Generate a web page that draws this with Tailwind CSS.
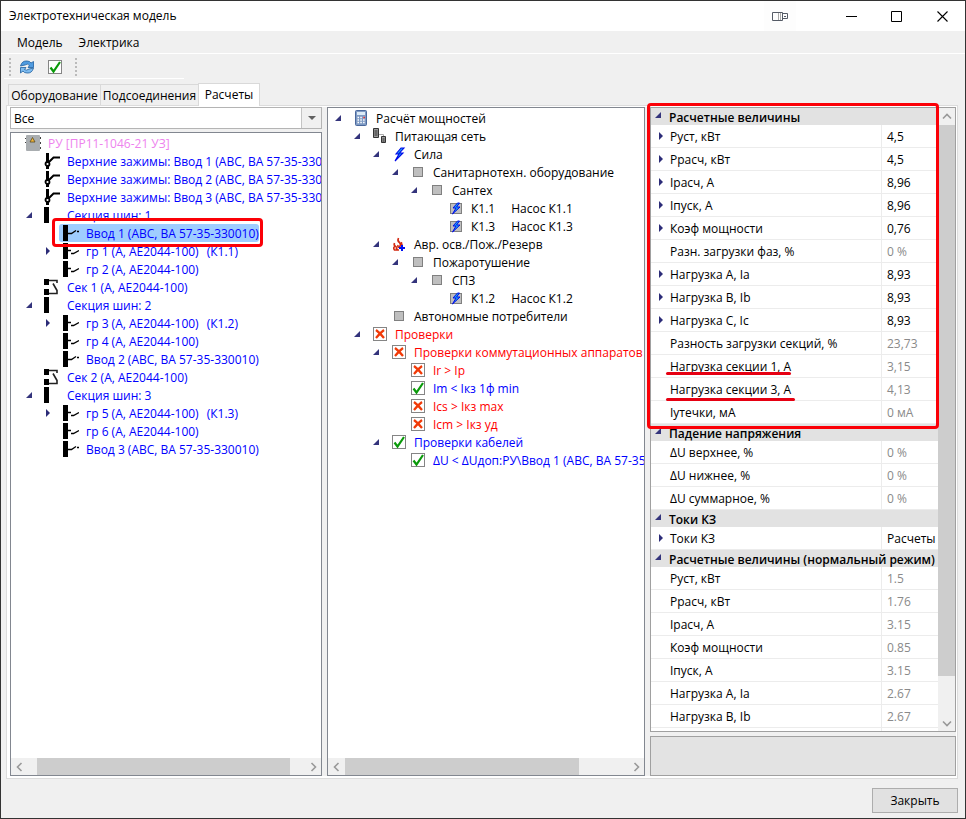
<!DOCTYPE html>
<html lang="ru">
<head>
  <meta charset="UTF-8" />
  <meta name="viewport" content="width=device-width, initial-scale=1.0"/>
  <title>Электротехническая модель</title>
  <script src="https://cdn.jsdelivr.net/npm/@tailwindcss/browser@4"></script>
</head>
<body class="h-screen overflow-hidden flex flex-col border border-[#333] bg-[#f0f0f0] text-black text-[12px]/[16px] font-['Open_Sans','Noto_Sans',sans-serif]">

  <!-- icon set -->
  <svg class="hidden">
    <symbol id="open" viewBox="0 0 6 6"><path d="M6 0V6H0Z" fill="#34347c"/></symbol>
    <symbol id="closed" viewBox="0 0 6 8"><path d="M1 0L5 4L1 8Z" fill="#2c2c78"/></symbol>
    <symbol id="ru" viewBox="0 0 16 16">
      <rect x="1" y="0" width="14" height="16" rx="1" fill="#a9adb0"/>
      <path d="M0 3h1v1H0zM0 7h1v1H0zM15 2h1v2h-1zM15 7h1v2h-1zM15 12h1v2h-1z" fill="#444"/>
      <path d="M7.500 2.500L10 7H5Z" fill="#f2b63a" stroke="#5a4a20" stroke-width=".8"/>
    </symbol>
    <symbol id="clamp" viewBox="0 0 16 16">
      <path d="M3.500 0V9M3.500 13V16" stroke="#000" stroke-width="3"/>
      <circle cx="3.500" cy="11" r="2" fill="#fff" stroke="#000" stroke-width="1.800"/>
      <path d="M4.500 9.500L9.500 4.500H16" fill="none" stroke="#000" stroke-width="2"/>
    </symbol>
    <symbol id="bus" viewBox="0 0 16 16"><rect width="5" height="16" fill="#000"/></symbol>
    <symbol id="input" viewBox="0 0 16 16">
      <rect width="5" height="16" fill="#000"/>
      <path d="M5 8.500H8.500L13 5.500M14 6.500H16" fill="none" stroke="#000" stroke-width="1.300"/>
    </symbol>
    <symbol id="group" viewBox="0 0 16 16">
      <rect width="5" height="16" fill="#000"/>
      <path d="M5 7.500H8M8 10.500H10.500L16 7.500" fill="none" stroke="#000" stroke-width="1.300"/>
    </symbol>
    <symbol id="section" viewBox="0 0 16 16">
      <path d="M0 0H5V6H0ZM0 10H5V16H0Z" fill="#000"/>
      <path d="M5 1.500H13V4M13 11V14.500H5M9 4.500L13 11.500" fill="none" stroke="#222" stroke-width="1.600"/>
    </symbol>
    <symbol id="calc" viewBox="0 0 16 16">
      <rect x="2.500" y=".5" width="11" height="15" rx="1" fill="#7f9bc4" stroke="#4a689c"/>
      <rect x="4" y="2" width="8" height="3" fill="#dcebf7"/>
      <path d="M4.500 7.500H12M4.500 10H12M4.500 12.500H12" stroke="#fff" stroke-width="1.500" stroke-dasharray="1.500 1.300"/>
      <path d="M10.200 7.500H12" stroke="#e03030" stroke-width="1.500"/>
    </symbol>
    <symbol id="net" viewBox="0 0 16 16">
      <path d="M1.500 .5H6.500V9.500H1.500ZM9.500 8.500H13.500V14.500H9.500Z" fill="#999" stroke="#333"/>
      <path d="M2.500 3H5.500M2.500 5H5.500M2.500 7H5.500M10.500 11H12.500M10.500 13H12.500" stroke="#333"/>
      <path d="M7 6.500H11.500V8" fill="none" stroke="#aaa"/>
    </symbol>
    <symbol id="bolt" viewBox="0 0 16 16">
      <path d="M10 2L5 8H8L4 15L12 7H8.500L13 2Z" fill="#19a3f5" stroke="#0008e8" stroke-width="1.100"/>
    </symbol>
    <symbol id="square" viewBox="0 0 16 16"><rect x="3.500" y="3.500" width="9" height="9" fill="#bfbfbf" stroke="#808080"/></symbol>
    <symbol id="boltbox" viewBox="0 0 16 16">
      <rect x="2.500" y="3.500" width="11" height="10" fill="#bfbfbf" stroke="#808080"/>
      <path d="M9.500 3L5 8H8L4.500 14L12 7H8.500L11.500 3Z" fill="#19a3f5" stroke="#0008e8"/>
    </symbol>
    <symbol id="fire" viewBox="0 0 16 16">
      <path d="M3.500 7Q2.500 9 4.500 10.500Q1.500 11 3.500 14H8M7.500 2Q6 5 8.500 6.500Q10.500 9 8.500 11Q6.500 12 7 9M10.500 6Q10 8 11.500 9M5 11.500L6.500 14" fill="none" stroke="#d22a12" stroke-width="1.600"/>
      <path d="M11 9V15M8 12H14" stroke="#0010f0" stroke-width="2"/>
    </symbol>
    <symbol id="cross" viewBox="0 0 16 16">
      <rect x="1.500" y="1.500" width="13" height="13" fill="#fff" stroke="#858585"/>
      <path d="M4 4Q8 7 12 12M12 4Q8 7 4 12" fill="none" stroke="#f13a08" stroke-width="2.200"/>
    </symbol>
    <symbol id="check" viewBox="0 0 16 16">
      <rect x="1.500" y="1.500" width="13" height="13" fill="#fff" stroke="#858585"/>
      <path d="M3.500 8.500L6.500 12.500L13 3" fill="none" stroke="#0a9a0a" stroke-width="2.200"/>
    </symbol>
    <symbol id="refresh" viewBox="0 0 16 16">
      <path d="M1.500 7Q3 1.500 8 2Q11 2 12 4L14.500 2.500V8.500H9L10.500 6.500Q8.500 4 6 6Z" fill="#4f9be0" stroke="#20609f" stroke-width=".8"/>
      <path d="M14.500 9Q13 14.500 8 14Q5 14 4 12L1.500 14V8.500H7L5.500 10.500Q7.500 12 10 10Z" fill="#7dbbef" stroke="#20609f" stroke-width=".8"/>
    </symbol>
    <symbol id="chevron" viewBox="0 0 10 10"><path d="M6.500 1L2.500 5L6.500 9" fill="none" stroke="#999" stroke-width="1.600"/></symbol>
  </svg>

  <header class="h-[30px] shrink-0 flex items-center bg-white pl-2">
    <h1 class="flex-1">Электротехническая модель</h1>
    <div class="w-8 h-full flex items-center justify-center bg-[#fdfdfd] mr-8">
      <svg class="w-4 h-[11px]" viewBox="0 0 16 11" fill="none" stroke="#555b66">
        <path d="M.5 1.500H10.500V9.500H.5Z"/><path d="M6.500 2V9M8.500 2V9" stroke="#aaa"/><path d="M10.500 2.500H15.500V7.500H10.500ZM12 5.500H14"/>
      </svg>
    </div>
    <button class="w-[46px] h-full flex items-center justify-center" aria-label="Свернуть"><svg class="size-[11px]" viewBox="0 0 11 11"><path d="M0 5.500H11" stroke="#000"/></svg></button>
    <button class="w-[45px] h-full flex items-center justify-center" aria-label="Развернуть"><svg class="size-[11px]" viewBox="0 0 11 11"><path d="M.5 .5H10.500V10.500H.5Z" fill="none" stroke="#000"/></svg></button>
    <button class="w-[46px] h-full flex items-center justify-center" aria-label="Закрыть окно"><svg class="size-[11px]" viewBox="0 0 11 11"><path d="M.5 .5L10.500 10.500M10.500 .5L.5 10.500" stroke="#000" stroke-width="1.100"/></svg></button>
  </header>

  <nav class="h-[23px] shrink-0 flex items-center gap-4 pl-4 pt-[2px] border-b border-white">
    <button>Модель</button>
    <button>Электрика</button>
  </nav>

  <div class="h-[25px] w-[180px] shrink-0 ml-[3px] pl-[5px] pt-[2px] flex items-center border-b border-white">
    <span class="h-[18px] border-l-2 border-dotted border-[#bbb]"></span>
    <button class="ml-2 size-4" aria-label="Обновить"><svg class="size-4"><use href="#refresh"/></svg></button>
    <button class="ml-3 size-4" aria-label="Проверить"><svg class="size-4"><use href="#check"/></svg></button>
    <span class="h-[18px] ml-3 border-l-2 border-dotted border-[#bbb]"></span>
  </div>

  <div class="h-[27px] shrink-0 flex items-end pl-[7px] relative z-10 -mb-px" role="tablist">
    <button role="tab" class="w-[93px] h-[21px] mb-px pt-[2px] flex items-center justify-center border border-b-0 border-[#d9d9d9] whitespace-nowrap">Оборудование</button>
    <button role="tab" class="w-[97px] h-[21px] mb-px pt-[2px] flex items-center justify-center border border-x-0 border-b-0 border-[#d9d9d9] whitespace-nowrap">Подсоединения</button>
    <button role="tab" aria-selected="true" class="w-[62px] h-[23px] border border-b-0 border-[#d9d9d9] bg-white whitespace-nowrap">Расчеты</button>
  </div>

  <main class="flex-1 min-h-0 ml-[5px] mr-[7px] border border-[#dcdcdc] bg-white pt-px pr-px pb-[2px] pl-[3px]">
    <div class="h-full grid grid-cols-[312fr_318fr_306fr] gap-[5px] bg-[#f0f0f0]">

      <section class="min-w-0 min-h-0 flex flex-col gap-[3px]">
        <div class="relative h-[22px] shrink-0">
          <select id="filter" aria-label="Фильтр" class="w-full h-full appearance-none bg-white border border-[#b4b4b4] pl-[3px] pt-[2px]">
            <option>Все</option>
          </select>
          <span class="absolute right-px inset-y-px w-5 bg-[#f0f0f0] border-l border-[#c4c4c4] flex items-center justify-center pointer-events-none">
            <svg class="w-2 h-1" viewBox="0 0 8 4"><path d="M0 0H8L4 4Z" fill="#606060"/></svg>
          </span>
        </div>
        <div class="flex-1 min-h-0 flex flex-col bg-white border border-[#828790]">
          <ul id="equipment" role="tree" class="flex-1 min-h-0 overflow-hidden pt-px"></ul>
          <div class="h-[17px] shrink-0 flex bg-[#f0f0f0]">
            <button class="w-[17px] flex items-center justify-center" aria-label="Влево"><svg class="size-[10px]"><use href="#chevron"/></svg></button>
            <div class="flex-[9]"></div>
            <div class="flex-[253] bg-[#cdcdcd]"></div>
            <div class="flex-[14]"></div>
            <button class="w-[17px] flex items-center justify-center" aria-label="Вправо"><svg class="size-[10px] rotate-180"><use href="#chevron"/></svg></button>
          </div>
        </div>
      </section>

      <section class="min-w-0 min-h-0 flex flex-col bg-white border border-[#828790]">
        <ul id="power" role="tree" class="flex-1 min-h-0 overflow-hidden pt-px"></ul>
        <div class="h-[17px] shrink-0 flex bg-[#f0f0f0]">
          <button class="w-[17px] flex items-center justify-center" aria-label="Влево"><svg class="size-[10px]"><use href="#chevron"/></svg></button>
          <div class="flex-[234] bg-[#cdcdcd]"></div>
          <div class="flex-[48]"></div>
          <button class="w-[17px] flex items-center justify-center" aria-label="Вправо"><svg class="size-[10px] rotate-180"><use href="#chevron"/></svg></button>
        </div>
      </section>

      <section class="relative min-w-0 min-h-0 flex flex-col gap-[4px]">
        <div class="flex-1 min-h-0 flex bg-white border border-[#a0a0a0]">
          <div class="flex-1 min-w-0 overflow-hidden">
            <table class="w-full table-fixed border-separate border-spacing-0">
              <colgroup><col /><col class="w-[56px]" /></colgroup>
              <tbody id="props"></tbody>
            </table>
          </div>
          <div class="w-[17px] shrink-0 flex flex-col bg-[#f0f0f0]">
            <button class="h-[17px] flex items-center justify-center" aria-label="Вверх"><svg class="size-[10px] rotate-90"><use href="#chevron"/></svg></button>
            <div class="flex-[551] bg-[#cdcdcd]"></div>
            <div class="flex-[38]"></div>
            <button class="h-[17px] flex items-center justify-center" aria-label="Вниз"><svg class="size-[10px] -rotate-90"><use href="#chevron"/></svg></button>
          </div>
        </div>
        <div class="h-10 shrink-0 bg-[#e3e3e3] border border-[#a0a0a0]"></div>
        <!-- frame around the first group -->
        <div class="absolute -top-1 -left-[3px] right-[17px] h-[326px] border-3 border-[#fb0007] rounded-[4px] pointer-events-none"></div>
      </section>
    </div>
  </main>

  <footer class="h-[39px] shrink-0 flex items-center justify-end pr-[7px]">
    <button class="w-[86px] h-[25px] mt-1 pt-px bg-[#e1e1e1] border border-[#adadad]">Закрыть</button>
  </footer>

  <script>
    // [level, arrow, icon, text, note]
    const equipment = [
      [0, "", "ru", "РУ [ПР11-1046-21 УЗ]"],
      [1, "", "clamp", "Верхние зажимы: Ввод 1 (ABC, BA 57-35-330010)"],
      [1, "", "clamp", "Верхние зажимы: Ввод 2 (ABC, BA 57-35-330010)"],
      [1, "", "clamp", "Верхние зажимы: Ввод 3 (ABC, BA 57-35-330010)"],
      [1, "open", "bus", "Секция шин: 1"],
      [2, "", "input", "Ввод 1 (ABC, BA 57-35-330010)"],
      [2, "closed", "group", "гр 1 (A, AE2044-100)", "(К1.1)"],
      [2, "", "group", "гр 2 (A, AE2044-100)"],
      [1, "", "section", "Сек 1 (A, AE2044-100)"],
      [1, "open", "bus", "Секция шин: 2"],
      [2, "closed", "group", "гр 3 (A, AE2044-100)", "(К1.2)"],
      [2, "", "group", "гр 4 (A, AE2044-100)"],
      [2, "", "input", "Ввод 2 (ABC, BA 57-35-330010)"],
      [1, "", "section", "Сек 2 (A, AE2044-100)"],
      [1, "open", "bus", "Секция шин: 3"],
      [2, "closed", "group", "гр 5 (A, AE2044-100)", "(К1.3)"],
      [2, "", "group", "гр 6 (A, AE2044-100)"],
      [2, "", "input", "Ввод 3 (ABC, BA 57-35-330010)"]
    ];

    const power = [
      [0, "open", "calc", "Расчёт мощностей"],
      [1, "open", "net", "Питающая сеть"],
      [2, "open", "bolt", "Сила"],
      [3, "open", "square", "Санитарнотехн. оборудование"],
      [4, "open", "square", "Сантех"],
      [5, "", "boltbox", "К1.1", "Насос К1.1"],
      [5, "", "boltbox", "К1.3", "Насос К1.3"],
      [2, "open", "fire", "Авр. осв./Пож./Резерв"],
      [3, "open", "square", "Пожаротушение"],
      [4, "open", "square", "СПЗ"],
      [5, "", "boltbox", "К1.2", "Насос К1.2"],
      [2, "", "square", "Автономные потребители"],
      [1, "open", "cross", "Проверки"],
      [2, "open", "cross", "Проверки коммутационных аппаратов"],
      [3, "", "cross", "Ir &gt; Iр"],
      [3, "", "check", "Im &lt; Iкз 1ф min"],
      [3, "", "cross", "Ics &gt; Iкз max"],
      [3, "", "cross", "Icm &gt; Iкз уд"],
      [2, "open", "check", "Проверки кабелей"],
      [3, "", "check", "ΔU &lt; ΔUдоп:РУ\\Ввод 1 (ABC, BA 57-35-330010)"]
    ];

    // [arrow, name, value, dim]; one item alone is a group heading
    const props = [
      ["Расчетные величины"],
      ["closed", "Pуст, кВт", "4,5"],
      ["closed", "Pрасч, кВт", "4,5"],
      ["closed", "Iрасч, А", "8,96"],
      ["closed", "Iпуск, А", "8,96"],
      ["closed", "Коэф мощности", "0,76"],
      ["", "Разн. загрузки фаз, %", "0 %", 1],
      ["closed", "Нагрузка А, Ia", "8,93"],
      ["closed", "Нагрузка B, Ib", "8,93"],
      ["closed", "Нагрузка C, Ic", "8,93"],
      ["", "Разность загрузки секций, %", "23,73", 1],
      ["", "Нагрузка секции 1, А", "3,15", 1, '<i class="absolute -left-1 right-0 top-[15px] h-[3px] rounded-full bg-[#e60012]"></i>'],
      ["", "Нагрузка секции 3, А", "4,13", 1, '<i class="absolute -left-1 -right-1 top-[18px] h-[3px] rounded-full bg-[#e60012]"></i>'],
      ["", "Iутечки, мА", "0 мА", 1],
      ["Падение напряжения"],
      ["", "ΔU верхнее, %", "0 %", 1],
      ["", "ΔU нижнее, %", "0 %", 1],
      ["", "ΔU суммарное, %", "0 %", 1],
      ["Токи КЗ"],
      ["closed", "Токи КЗ", "Расчеты"],
      ["Расчетные величины (нормальный режим)"],
      ["", "Pуст, кВт", "1.5", 1],
      ["", "Pрасч, кВт", "1.76", 1],
      ["", "Iрасч, А", "3.15", 1],
      ["", "Коэф мощности", "0.85", 1],
      ["", "Iпуск, А", "3.15", 1],
      ["", "Нагрузка А, Ia", "2.67", 1],
      ["", "Нагрузка B, Ib", "2.67", 1],
      ["", "Нагрузка C, Ic", "2.67", 1]
    ];

    const arrow = (a) => a === "open" ? '<svg class="size-[6px]"><use href="#open"/></svg>'
      : a === "closed" ? '<svg class="w-[6px] h-2"><use href="#closed"/></svg>' : "";

    function drawTree(id, rows, start, noteGap, color, selected) {
      document.getElementById(id).innerHTML = rows.map(([level, a, icon, text, note], i) => `
        <li role="treeitem" class="h-[18px] flex items-center whitespace-nowrap ${color(i)}">
          <span class="shrink-0 flex justify-end pr-3 pb-px" style="width:${start + level * 19}px">${arrow(a)}</span>
          <span class="${i === selected ? "relative h-full flex items-center -ml-1 pl-1 rounded-[3px] bg-[#9fcdff]" : "flex items-center"}">
            <svg class="size-4 shrink-0 mr-[7px] overflow-visible"><use href="#${icon}"/></svg>
            <span class="pt-[2px]">${text}</span>${note ? `<span class="pt-[2px] ${noteGap}">${note}</span>` : ""}
            ${i === selected ? '<i class="absolute -left-[7px] -right-1 -top-[6px] -bottom-[5px] border-3 border-[#fb0007] rounded-[4px]"></i>' : ""}
          </span>
        </li>`).join("");
    }

    drawTree("equipment", equipment, 14, "ml-2", i => i === 0 ? "text-[#ee82ee]" : "text-[#0000ff]", 5);
    drawTree("power", power, 25, "ml-4", i => [15, 18, 19].includes(i) ? "text-[#0000ff]" : i > 11 ? "text-[#ff0000]" : "text-black", -1);

    document.getElementById("props").innerHTML = props.map(([a, name, value, dim, mark]) => name === undefined ? `
      <tr><th colspan="2" class="h-[17px] p-0 pl-1 bg-[#e2e2e2] text-left font-semibold whitespace-nowrap">
        <div class="h-[17px] flex items-center"><span class="w-[14px] shrink-0 pb-1">${arrow("open")}</span><span class="pt-[2px]">${a}</span></div>
      </th></tr>` : `
      <tr>
        <td class="h-[23px] p-0 pl-[7px] border-b border-r border-[#ececec] whitespace-nowrap">
          <div class="flex items-center"><span class="w-3 shrink-0">${arrow(a)}</span><span class="relative pt-[2px]">${name}${mark || ""}</span></div>
        </td>
        <td class="h-[23px] p-0 pt-[2px] pl-[5px] border-b border-[#ececec] whitespace-nowrap ${dim ? "text-[#8a8a8a]" : ""}">${value}</td>
      </tr>`).join("");
  </script>

</body>
</html>
